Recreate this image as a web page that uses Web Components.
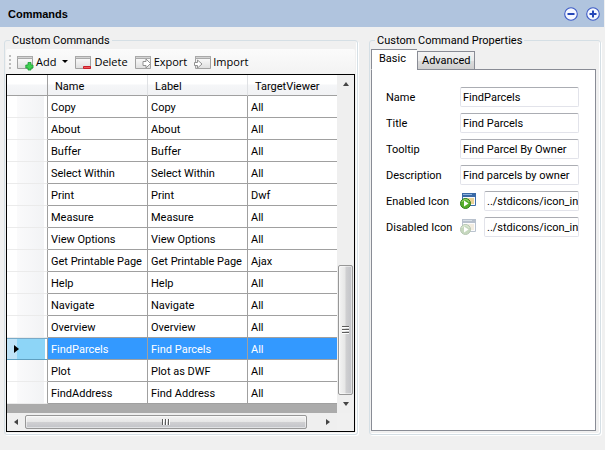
<!DOCTYPE html>
<html lang="en">
<head>
<meta charset="utf-8">
<title>Commands</title>
<style>
html,body{margin:0;background:#f0f0f0}
body{font:11px/13px Roboto,"Liberation Sans",sans-serif;color:#000;min-height:100vh}
</style>
</head>
<body>
<command-page></command-page>
<script>
const define = (name, html, setup) => {
  const template = document.createElement('template');
  template.innerHTML = html;
  customElements.define(name, class extends HTMLElement {
    constructor() {
      super();
      this.attachShadow({mode: 'open'}).append(template.content.cloneNode(true));
    }
    connectedCallback() {
      if (setup && !this.ready) { this.ready = true; setup(this, this.shadowRoot); }
    }
  });
};

define('title-bar', `
<style>
:host{display:flex;align-items:center;box-sizing:border-box;height:27px;margin-right:1px;padding:1px 4px 0 8px;background:#b0c4de;font-family:"Liberation Sans",Arial,sans-serif;font-weight:bold}
h1{font:inherit;margin:0;flex:1}
.tools{display:flex;gap:8px}
button{border:0;padding:0;background:none;width:14px;height:14px}
svg{display:block}
</style>
<h1><slot></slot></h1>
<div class="tools">
<button aria-label="Collapse"><svg width="14" height="14" viewBox="0 0 14 14"><circle cx="7" cy="7" r="6.3" fill="#f4f7ff" stroke="#3b59c4" stroke-width="1.1"/><path d="M3.5 7h7" stroke="#2446b8" stroke-width="2"/></svg></button>
<button aria-label="Expand"><svg width="14" height="14" viewBox="0 0 14 14"><circle cx="7" cy="7" r="6.3" fill="#f4f7ff" stroke="#3b59c4" stroke-width="1.1"/><path d="M3.5 7h7M7 3.5v7" stroke="#2446b8" stroke-width="2"/></svg></button>
</div>`);

define('group-box', `
<style>
:host{display:flex;min-width:0}
fieldset{flex:1;display:flex;flex-direction:column;min-width:0;margin:0;padding:2px 2px 2px 1px;border:1px solid #d5dfe5;border-radius:3px;box-shadow:inset -1px -1px #fff,1px 1px #fff}
legend{margin-left:4px;padding:0 2px}
::slotted(*){flex:none}
::slotted(.fill){flex:1}
</style>
<fieldset><legend></legend><slot></slot></fieldset>`, (host, root) => {
  root.querySelector('legend').textContent = host.getAttribute('label');
});

const windowShape = `<defs><linearGradient id="f" x2="0" y2="1"><stop stop-color="#fff"/><stop offset="1" stop-color="#dedede"/></linearGradient></defs>
<path d="M.5 2.5h15v12H.5z" fill="url(#f)" stroke="#a2a2a2"/><path d="M0 2h16v3H0z" fill="#aaa"/><path d="M1 3h14v1H1z" fill="#d4d4d4"/>`;
const toolIcons = {
  add: windowShape + '<path d="M11 8.500h3v2.500h2v3h-2v2h-3v-2H8.800v-3H11z" fill="#3fd052" stroke="#199a32" stroke-width=".8"/>',
  remove: windowShape + '<path d="M8.500 12.500h7v2h-7z" fill="#f25a5a" stroke="#c8202e"/>',
  export: windowShape + '<path d="M8 7.500h3V5l4.500 4.500L11 14v-2.500H8z" fill="#fff" stroke="#939393"/>',
  import: '<g transform="translate(1 0)">' + windowShape + '</g><path d="M.5 8.500h3V6L8 10l-4.500 4v-2.500h-3z" fill="#fff" stroke="#939393"/>'
};

define('tool-button', `
<style>
:host{display:block;flex:none}
button{display:flex;align-items:center;gap:3px;border:0;padding:0;background:none;color:inherit;font:11px/15px "Open Sans","Noto Sans",sans-serif}
svg{display:block;overflow:visible}
.arrow{border:3px solid transparent;border-top-color:#000;border-bottom:0;margin-left:3px}
:host(:not([menu])) .arrow{display:none}
</style>
<button><svg width="16" height="16" viewBox="0 0 16 16"></svg><slot></slot><span class="arrow"></span></button>`, (host, root) => {
  root.querySelector('svg').innerHTML = toolIcons[host.getAttribute('icon')];
});

define('tool-strip', `
<style>
:host{display:flex;align-items:center;gap:7px;height:25px;padding-left:3px;background:linear-gradient(#fbfbfb,#f3f3f3);border-radius:2px;overflow:hidden;box-sizing:border-box}
.grip{width:2px;height:14px;margin-right:-1px;background:repeating-linear-gradient(#bdbdbd 0 2px,transparent 2px 4px)}
</style>
<span class="grip"></span><slot></slot>`);

define('scroll-bar', `
<style>
:host{display:flex;align-items:center;min-width:0;background:#efefef}
.end{flex:none;width:18px;height:18px;padding:0;border:0;background:none;display:grid;place-items:center}
.track{flex:1;display:flex;align-self:stretch;padding:2px 0;min-width:0}
.thumb{display:flex;align-items:center;justify-content:center;box-sizing:border-box;border:1px solid #979797;border-radius:2px;background:linear-gradient(#f4f4f4,#e6e6e6 48%,#d0d0d2 52%,#c2c3c8);box-shadow:inset 0 0 0 1px #ffffff80;flex:0 0 96%}
.grips{width:8px;height:6px;background:repeating-linear-gradient(90deg,#5c5c5c 0 1px,#fff 1px 2px,transparent 2px 3px)}
i{border:3px solid transparent}
.back i{border-left:0;border-right:4px solid #444}
.next i{border-right:0;border-left:4px solid #444}
:host([vertical]){flex-direction:column}
:host([vertical]) .track{flex-direction:column;justify-content:flex-end;padding:0 1px;align-self:stretch}
:host([vertical]) .thumb{flex-basis:43%;background:linear-gradient(90deg,#f4f4f4,#e6e6e6 48%,#d0d0d2 52%,#c2c3c8)}
:host([vertical]) .grips{width:7px;height:8px;background:repeating-linear-gradient(#5c5c5c 0 1px,#fff 1px 2px,transparent 2px 3px)}
:host([vertical]) .back i{border:3px solid transparent;border-top:0;border-bottom:4px solid #444}
:host([vertical]) .next i{border:3px solid transparent;border-bottom:0;border-top:4px solid #444}
</style>
<button class="end back" aria-label="Scroll back"><i></i></button><div class="track"><div class="thumb"><span class="grips"></span></div></div><button class="end next" aria-label="Scroll forward"><i></i></button>`);

define('command-grid', `
<style>
:host{display:grid;grid-template-columns:minmax(0,1fr) 17px;border:1px solid #000;background:#f0f0f0}
.view{background:#ababab;padding-bottom:9px;overflow:hidden}
table{width:100%;table-layout:fixed;border-spacing:0}
th,td{box-sizing:border-box;padding:1px 3px 0;text-align:left;font-weight:normal;white-space:nowrap;overflow:hidden}
thead th{height:21px;padding:2px 7px 0;border-bottom:1px solid #a0a0a0;border-right:1px solid #dfe1e4;background:linear-gradient(#fff 45%,#f5f6f8 50%,#f1f2f4)}
thead th:first-child{border-right-color:#a0a0a0}
thead th:last-child{border-right:0}
td{height:22px;background:#fff;border-right:1px solid #a0a0a0;border-bottom:1px solid #a0a0a0}
td:last-child{border-right:0}
tbody th{height:22px;padding:0 4px;border-right:1px solid #a0a0a0;border-bottom:1px solid #ebebeb;background:linear-gradient(90deg,#fff 10px,#fafafb 10px,#f2f3f5 37px,#fff 37px)}
tr[aria-selected] td{background:#3399ff;color:#fff}
tr[aria-selected] th{background:linear-gradient(90deg,#bfe3f7 10px,#8dd5f7 10px 38px,#fff 38px);border-bottom-color:#5f9fc0;box-shadow:inset 0 1px #78aac8}
.mark{display:block;width:0;border:4px solid transparent;border-left:5px solid #000;border-right:0;margin-left:3px}
</style>
<div class="view"><table><colgroup><col style="width:41px"><col style="width:100px"><col style="width:100px"><col></colgroup>
<thead><tr><th scope="col"></th><th scope="col">Name</th><th scope="col">Label</th><th scope="col">TargetViewer</th></tr></thead><tbody></tbody></table></div>
<scroll-bar vertical></scroll-bar><scroll-bar></scroll-bar>`, (host, root) => {
  const rows = [['Copy'],['About'],['Buffer'],['Select Within'],['Print','Print','Dwf'],['Measure'],['View Options'],['Get Printable Page','Get Printable Page','Ajax'],['Help'],['Navigate'],['Overview'],['FindParcels','Find Parcels'],['Plot','Plot as DWF'],['FindAddress','Find Address']];
  const body = root.querySelector('tbody');
  for (const [name, label = name, viewer = 'All'] of rows) {
    const tr = body.insertRow();
    const head = document.createElement('th');
    head.scope = 'row';
    tr.append(head);
    for (const text of [name, label, viewer]) tr.insertCell().textContent = text;
    if (name === 'FindParcels') {
      tr.setAttribute('aria-selected', 'true');
      head.innerHTML = '<span class="mark"></span>';
    }
  }
});

define('tab-panel', `
<style>
:host{display:flex;flex-direction:column;margin:0 2px 1px 0;isolation:isolate}
.tabs{display:flex;align-items:flex-end;margin-bottom:-1px;position:relative;z-index:1}
button{font:inherit;color:inherit;border:1px solid #898c95;margin:0;padding:0 4px;height:19px;background:linear-gradient(#f3f3f3,#ebebeb 50%,#dddddd 50%,#cfcfcf)}
button[aria-selected=true]{height:21px;padding:0 11px 2px 7px;background:#fff;border-bottom-color:#fff;border-right:0}
.page{flex:1;border:1px solid #898c95;background:#fff;padding:17px 16px 17px 15px;display:flex;flex-direction:column;gap:6px}
</style>
<div class="tabs" role="tablist"><button role="tab" aria-selected="true">Basic</button><button role="tab" aria-selected="false">Advanced</button></div>
<div class="page" role="tabpanel"><slot></slot></div>`);

define('form-field', `
<style>
:host{display:flex;align-items:center;height:20px;margin-left:-1px}
label{flex:0 0 74px}
input{flex:1;min-width:0;box-sizing:border-box;height:20px;margin:0;padding:0 0 0 2px;border:1px solid #e2e3ea;border-top-color:#abadb3;border-radius:2px;background:#fff;font:inherit;color:inherit}
::slotted(*){flex:none;margin-right:8px}
</style>
<label for="box"></label><slot></slot><input id="box" type="text">`, (host, root) => {
  root.querySelector('label').textContent = host.getAttribute('label');
  root.querySelector('input').value = host.getAttribute('value');
});

define('run-icon', `
<style>:host{display:block;width:16px;height:16px}:host([off]){opacity:.4;filter:saturate(.5)}svg{display:block}</style>
<svg width="16" height="16" viewBox="0 0 16 16"><path d="M2.500.5h13v12h-13z" fill="#f6faff" stroke="#3f6ea8"/><path d="M2 0h14v4H2z" fill="#3a69a6"/><path d="M3 1h9v1H3z" fill="#8fb4de"/><path d="M4 5h3v7H4z" fill="#a9c7ea"/><path d="M8 6h6M9 8h5M10 10h4" stroke="#e0a92b"/><circle cx="5.500" cy="10.500" r="5" fill="#55ae2b" stroke="#2f7d1c"/><path d="M1.800 9a4 4 0 0 1 7.400 0" fill="none" stroke="#a7dc7c"/><path d="M4 7.500v6l4.500-3z" fill="#fff"/></svg>`);

define('command-page', `
<style>
:host{display:block}
main{display:flex;gap:11px;padding:7px 4px 15px}
.list{flex:354 1 0}
.props{flex:232 1 0}
</style>
<title-bar>Commands</title-bar>
<main>
<group-box class="list" label="Custom Commands">
<tool-strip><tool-button icon="add" menu>Add</tool-button><tool-button icon="remove">Delete</tool-button><tool-button icon="export">Export</tool-button><tool-button icon="import">Import</tool-button></tool-strip>
<command-grid></command-grid>
</group-box>
<group-box class="props" label="Custom Command Properties">
<tab-panel class="fill">
<form-field label="Name" value="FindParcels"></form-field>
<form-field label="Title" value="Find Parcels"></form-field>
<form-field label="Tooltip" value="Find Parcel By Owner"></form-field>
<form-field label="Description" value="Find parcels by owner"></form-field>
<form-field label="Enabled Icon" value="../stdicons/icon_in"><run-icon></run-icon></form-field>
<form-field label="Disabled Icon" value="../stdicons/icon_in"><run-icon off></run-icon></form-field>
</tab-panel>
</group-box>
</main>`);
</script>
</body>
</html>
